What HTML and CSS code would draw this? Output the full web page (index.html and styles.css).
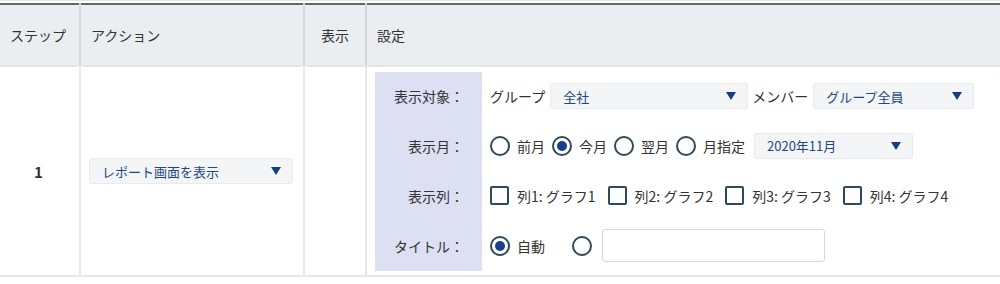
FILE: index.html
```html
<!DOCTYPE html>
<html lang="ja">
<head>
  <meta charset="UTF-8">
  <title>ステップ設定</title>
  <link rel="stylesheet" href="styles.css">
</head>
<body>
  <div class="topline"></div>
  <table class="steps">
    <colgroup>
      <col class="w-step">
      <col class="w-action">
      <col class="w-show">
      <col class="w-conf">
    </colgroup>
    <thead>
      <tr>
        <th>ステップ</th>
        <th>アクション</th>
        <th class="c-show">表示</th>
        <th>設定</th>
      </tr>
    </thead>
    <tbody>
      <tr>
        <td class="num">1</td>
        <td class="c-action">
          <div class="select action-select"><span>レポート画面を表示</span><i class="arrow"></i></div>
        </td>
        <td></td>
        <td class="c-conf">
          <table class="conf">
            <tr>
              <th>表示対象：</th>
              <td>
                <div class="line">
                  <span class="txt">グループ</span>
                  <div class="select sel-group"><span>全社</span><i class="arrow"></i></div>
                  <span class="txt">メンバー</span>
                  <div class="select sel-member"><span>グループ全員</span><i class="arrow"></i></div>
                </div>
              </td>
            </tr>
            <tr>
              <th>表示月：</th>
              <td>
                <div class="line">
                  <span class="radio"></span><span class="txt">前月</span>
                  <span class="radio on"></span><span class="txt">今月</span>
                  <span class="radio"></span><span class="txt">翌月</span>
                  <span class="radio"></span><span class="txt">月指定</span>
                  <div class="select sel-month"><span>2020年11月</span><i class="arrow"></i></div>
                </div>
              </td>
            </tr>
            <tr>
              <th>表示列：</th>
              <td>
                <div class="line">
                  <span class="check"></span><span class="txt">列1: グラフ1</span>
                  <span class="check"></span><span class="txt">列2: グラフ2</span>
                  <span class="check"></span><span class="txt">列3: グラフ3</span>
                  <span class="check"></span><span class="txt">列4: グラフ4</span>
                </div>
              </td>
            </tr>
            <tr>
              <th>タイトル：</th>
              <td>
                <div class="line">
                  <span class="radio on"></span><span class="txt auto">自動</span>
                  <span class="radio"></span>
                  <input class="title-input" type="text">
                </div>
              </td>
            </tr>
          </table>
        </td>
      </tr>
    </tbody>
  </table>
</body>
</html>
```

FILE: styles.css
```css
body {
  margin: 0;
  font-family: "Noto Sans CJK JP", "Noto Sans", sans-serif;
  font-size: 14px;
  color: #333;
  background: #fff;
}
.topline {
  height: 3px;
  border-top: 1px solid #d6ead6;
  box-sizing: border-box;
}
.steps {
  width: 1000px;
  table-layout: fixed;
  border-collapse: collapse;
  border-top: 2px solid #666;
}
.w-step { width: 80px; }
.w-action { width: 224px; }
.w-show { width: 62px; }
.w-conf { width: 634px; }
.steps > thead > tr > th {
  background: #eaeef1;
  font-weight: normal;
  text-align: left;
  height: 60px;
  padding: 0 0 0 10px;
  border-left: 2px solid #d4d7da;
  border-bottom: 2px solid #e4e6e8;
}
.steps > thead > tr > th:first-child,
.steps > tbody > tr > td:first-child {
  border-left: none;
}
.steps > tbody > tr > td {
  height: 208px;
  padding: 0;
  border-left: 2px solid #e6e8ea;
  border-bottom: 2px solid #e6e8ea;
  vertical-align: middle;
}
.steps > thead > tr > th.c-show { padding-left: 16px; }
.steps > tbody > tr > td.num {
  text-align: center;
  font-weight: bold;
  font-size: 15px;
  padding-right: 2px;
}
.steps > tbody > tr > td.c-action { padding-left: 8px; }
.steps > tbody > tr > td.c-conf { padding: 0 0 0 8px; }

.select {
  display: inline-flex;
  align-items: center;
  justify-content: space-between;
  box-sizing: border-box;
  height: 26px;
  padding: 0 11px 0 12px;
  background: #f3f5f7;
  border: 1px solid #e8eaec;
  border-radius: 3px;
  color: #1e4680;
  font-size: 13px;
}
.arrow {
  width: 0;
  height: 0;
  border-left: 5px solid transparent;
  border-right: 5px solid transparent;
  border-top: 8px solid #163d80;
}
.action-select { width: 204px; }
.sel-group { width: 198px; margin-right: 4px; }
.sel-member { width: 161px; }
.sel-month { width: 159px; margin-left: 4px; }

.conf {
  border-collapse: collapse;
}
.conf th {
  width: 107px;
  height: 50px;
  box-sizing: border-box;
  background: #dde0f3;
  font-weight: normal;
  text-align: right;
  padding: 0 18px 0 0;
}
.conf tr:first-child th { height: 49px; }
.conf td {
  padding: 0 0 0 8px;
}
.line {
  display: flex;
  align-items: center;
}
.txt {
  margin-right: 5px;
  white-space: nowrap;
}
.radio {
  width: 20px;
  height: 20px;
  box-sizing: border-box;
  border: 2px solid #2c4a5a;
  border-radius: 50%;
  margin-right: 7px;
  position: relative;
  flex: none;
}
.radio.on::after {
  content: "";
  position: absolute;
  left: 3px;
  top: 3px;
  width: 10px;
  height: 10px;
  border-radius: 50%;
  background: #173f8c;
}
.line .txt + .radio { margin-left: 2px; }
.auto { margin-right: 25px; }
.check {
  width: 19px;
  height: 19px;
  box-sizing: border-box;
  border: 2px solid #2c4a5a;
  border-radius: 2px;
  margin-right: 8px;
  flex: none;
}
.line .txt + .check { margin-left: 7px; }
.title-input {
  width: 223px;
  height: 33px;
  box-sizing: border-box;
  border: 1px solid #d6d8da;
  border-radius: 3px;
  margin-left: 3px;
  font-family: inherit;
}
```
